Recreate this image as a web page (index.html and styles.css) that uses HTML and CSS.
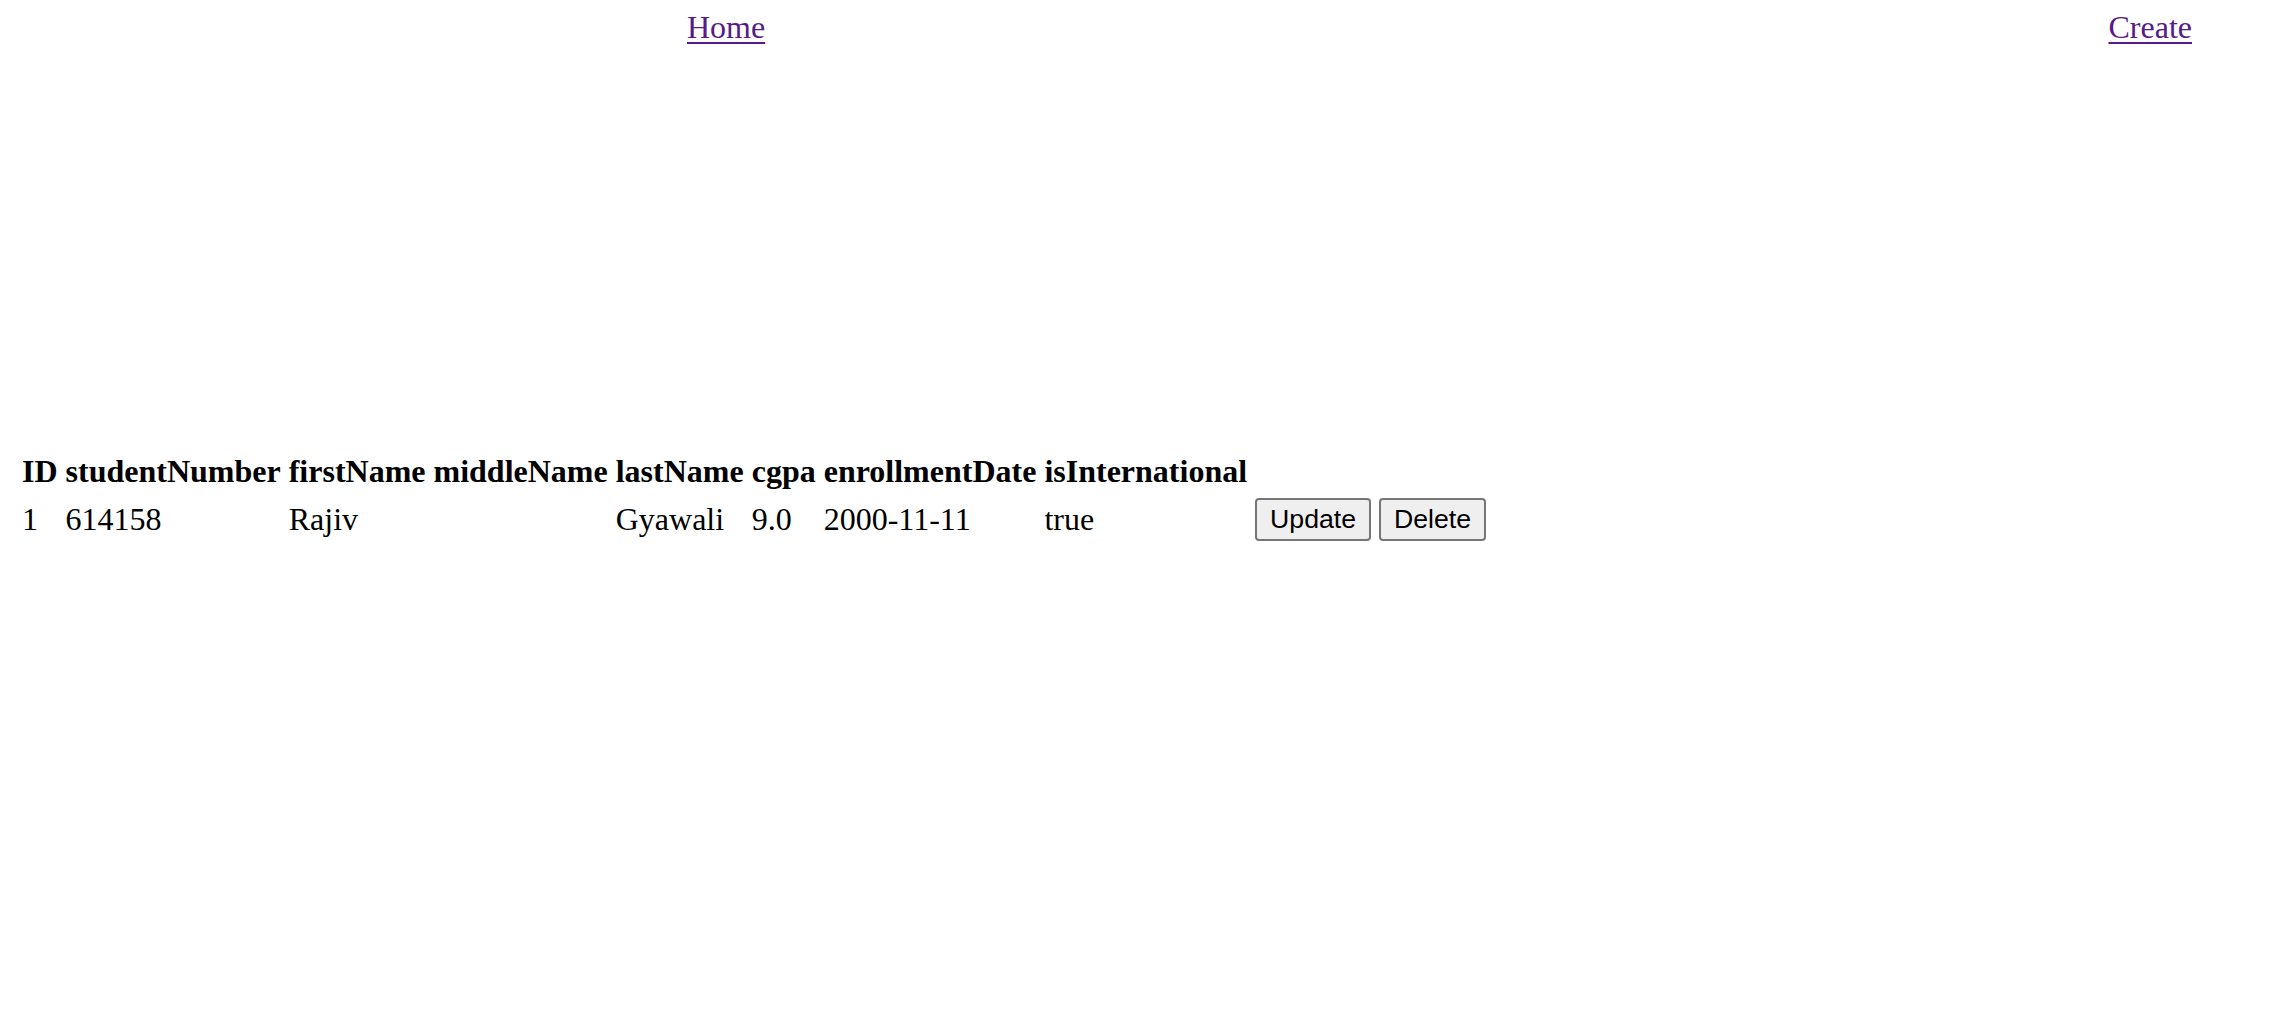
FILE: index.html
```html
<!DOCTYPE html>
<html>
<head>
<meta charset="utf-8">
<title>Students</title>
<link rel="stylesheet" href="styles.css">
</head>
<body>
<nav class="nav">
  <a class="nav-link nav-home" href="#">Home</a>
  <a class="nav-link nav-create" href="#">Create</a>
</nav>
<main class="main">
  <table class="students">
    <thead>
      <tr>
        <th>ID</th>
        <th>studentNumber</th>
        <th>firstName</th>
        <th>middleName</th>
        <th>lastName</th>
        <th>cgpa</th>
        <th>enrollmentDate</th>
        <th>isInternational</th>
        <th></th>
      </tr>
    </thead>
    <tbody>
      <tr>
        <td>1</td>
        <td>614158</td>
        <td>Rajiv</td>
        <td></td>
        <td>Gyawali</td>
        <td>9.0</td>
        <td>2000-11-11</td>
        <td>true</td>
        <td><button class="btn">Update</button> <button class="btn">Delete</button></td>
      </tr>
    </tbody>
  </table>
</main>
</body>
</html>
```
FILE: styles.css
```css
html, body {
  margin: 0;
  padding: 0;
  background: #ffffff;
}

body {
  font-family: "Liberation Serif", "Times New Roman", serif;
  font-size: 32px;
  color: #000000;
}

.nav {
  display: flex;
  align-items: flex-start;
  padding-top: 9px;
  padding-left: 687px;
  padding-right: 78px;
}

.nav-link {
  color: #551a8b;
  text-decoration: underline;
  text-decoration-thickness: 2px;
  text-underline-offset: 4px;
}

.nav-create {
  margin-left: auto;
}

.main {
  padding-left: 16px;
  padding-top: 401px;
}

.students {
  border-collapse: separate;
  border-spacing: 4px;
  font-size: 32px;
}

.students th,
.students td {
  padding: 2px;
  text-align: left;
  vertical-align: middle;
  white-space: nowrap;
}

.students th {
  font-weight: bold;
}

.btn {
  font-family: "Liberation Sans", Arial, sans-serif;
  font-size: 26.667px;
  color: #000000;
  background: #efefef;
  border: 2px solid #767676;
  border-radius: 4px;
  padding: 4px 13px;
  margin: 0;
  line-height: normal;
}
```
